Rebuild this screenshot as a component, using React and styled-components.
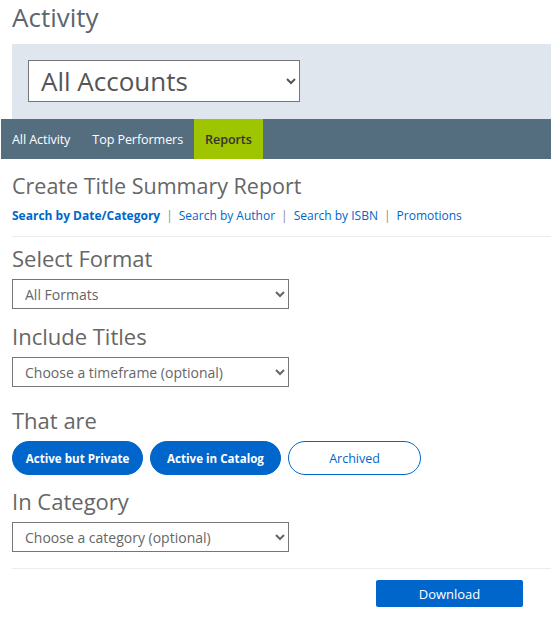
import React, { useState } from "react";
import styled, { createGlobalStyle } from "styled-components";

const GlobalStyle = createGlobalStyle`
  body {
    margin: 0;
    background: #fff;
    font-family: "Open Sans", "Liberation Sans", sans-serif;
  }
`;

const Page = styled.main`
  padding: 0 0 0 12px;
  width: 551px;
  box-sizing: border-box;
`;

const PageTitle = styled.h1`
  margin: 0;
  height: 44px;
  font-size: 26px;
  line-height: 35px;
  font-weight: 400;
  color: #5a6670;
`;

const AccountPanel = styled.div`
  background: #dfe6ee;
  padding: 16px 16px 17px;
`;

const AccountSelect = styled.select`
  display: block;
  width: 272px;
  height: 42px;
  border: 1px solid #767676;
  background: #fff;
  font-family: inherit;
  font-size: 26px;
  color: #555;
  padding: 0 8px;
`;

const Nav = styled.nav`
  display: flex;
  height: 40px;
  margin-left: -11px;
  background: #546e80;
`;

const NavItem = styled.a`
  display: flex;
  align-items: center;
  padding: 0 11px;
  font-size: 12.6px;
  letter-spacing: -0.1px;
  color: ${(p) => (p.$active ? "#333" : "#fff")};
  background: ${(p) => (p.$active ? "#9fc400" : "transparent")};
  font-weight: ${(p) => (p.$active ? 600 : 400)};
  text-decoration: none;
`;

const Content = styled.section`
  display: flex;
  flex-direction: column;
  align-items: flex-start;
`;

const ReportTitle = styled.h2`
  margin: 14px 0 0;
  font-size: 21.5px;
  line-height: 26px;
  font-weight: 400;
  color: #666;
`;

const LinkRow = styled.div`
  display: flex;
  align-items: center;
  gap: 6px;
  margin-top: 9px;
  font-size: 12px;
  line-height: 16px;
`;

const TabLink = styled.a`
  color: #0066cc;
  font-weight: ${(p) => (p.$current ? 700 : 400)};
  text-decoration: none;
`;

const Sep = styled.span`
  color: #8a8a8a;
`;

const Divider = styled.hr`
  align-self: stretch;
  margin: ${(p) => p.$top}px 0 0;
  border: none;
  border-top: 1px solid #ececec;
`;

const Label = styled.h3`
  margin: ${(p) => p.$top}px 0 8px;
  font-size: 22px;
  line-height: 26px;
  font-weight: 400;
  color: #666;
`;

const FieldSelect = styled.select`
  display: block;
  width: 277px;
  height: 30px;
  border: 1px solid #767676;
  background: #fff;
  font-family: inherit;
  font-size: 14px;
  color: #666;
  padding: 0 8px;
`;

const Pills = styled.div`
  display: flex;
  gap: 7px;
`;

const Pill = styled.button`
  width: ${(p) => (p.$on ? "131px" : "133px")};
  height: 34px;
  border-radius: 17px;
  border: 1px solid #0066cc;
  background: ${(p) => (p.$on ? "#0066cc" : "#fff")};
  color: ${(p) => (p.$on ? "#fff" : "#0066cc")};
  font-family: inherit;
  font-size: ${(p) => (p.$on ? "11.6px" : "12.5px")};
  font-weight: ${(p) => (p.$on ? 700 : 400)};
  padding: 0;
  cursor: pointer;
`;

const Footer = styled.div`
  align-self: stretch;
  display: flex;
  justify-content: flex-end;
  padding: 11px 28px 0 0;
`;

const DownloadButton = styled.button`
  width: 147px;
  height: 27px;
  border: none;
  border-radius: 2px;
  background: #0066cc;
  color: #fff;
  font-family: inherit;
  font-size: 13px;
`;

export default function App() {
  const [states, setStates] = useState({ priv: true, cat: true, arch: false });
  const toggle = (k) => setStates((s) => ({ ...s, [k]: !s[k] }));

  return (
    <Page>
      <GlobalStyle />
      <PageTitle>Activity</PageTitle>
      <AccountPanel>
        <AccountSelect defaultValue="all">
          <option value="all">All Accounts</option>
        </AccountSelect>
      </AccountPanel>
      <Nav>
        <NavItem href="#">All Activity</NavItem>
        <NavItem href="#">Top Performers</NavItem>
        <NavItem href="#" $active>
          Reports
        </NavItem>
      </Nav>

      <Content>
        <ReportTitle>Create Title Summary Report</ReportTitle>
        <LinkRow>
          <TabLink href="#" $current>
            Search by Date/Category
          </TabLink>
          <Sep>|</Sep>
          <TabLink href="#">Search by Author</TabLink>
          <Sep>|</Sep>
          <TabLink href="#">Search by ISBN</TabLink>
          <Sep>|</Sep>
          <TabLink href="#">Promotions</TabLink>
        </LinkRow>
        <Divider $top={12} />

        <Label $top={8}>Select Format</Label>
        <FieldSelect defaultValue="all">
          <option value="all">All Formats</option>
        </FieldSelect>

        <Label $top={14}>Include Titles</Label>
        <FieldSelect defaultValue="">
          <option value="">Choose a timeframe (optional)</option>
        </FieldSelect>

        <Label $top={20}>That are</Label>
        <Pills>
          <Pill $on={states.priv} onClick={() => toggle("priv")}>
            Active but Private
          </Pill>
          <Pill $on={states.cat} onClick={() => toggle("cat")}>
            Active in Catalog
          </Pill>
          <Pill $on={states.arch} onClick={() => toggle("arch")}>
            Archived
          </Pill>
        </Pills>

        <Label $top={13}>In Category</Label>
        <FieldSelect defaultValue="">
          <option value="">Choose a category (optional)</option>
        </FieldSelect>

        <Divider $top={16} />
        <Footer>
          <DownloadButton>Download</DownloadButton>
        </Footer>
      </Content>
    </Page>
  );
}
